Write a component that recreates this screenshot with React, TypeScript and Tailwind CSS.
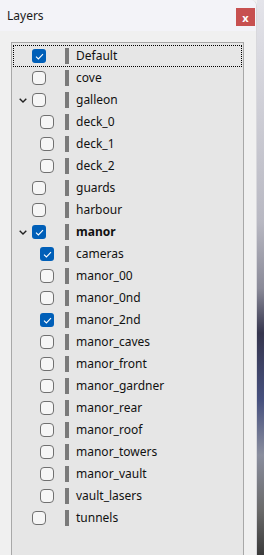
import React from "react";

type Layer = {
    name: string;
    level: number;
    checked?: boolean;
    expandable?: boolean;
    bold?: boolean;
    focused?: boolean;
};

const layers: Layer[] = [
    { name: "Default", level: 0, checked: true, focused: true },
    { name: "cove", level: 0 },
    { name: "galleon", level: 0, expandable: true },
    { name: "deck_0", level: 1 },
    { name: "deck_1", level: 1 },
    { name: "deck_2", level: 1 },
    { name: "guards", level: 0 },
    { name: "harbour", level: 0 },
    { name: "manor", level: 0, checked: true, expandable: true, bold: true },
    { name: "cameras", level: 1, checked: true },
    { name: "manor_00", level: 1 },
    { name: "manor_0nd", level: 1 },
    { name: "manor_2nd", level: 1, checked: true },
    { name: "manor_caves", level: 1 },
    { name: "manor_front", level: 1 },
    { name: "manor_gardner", level: 1 },
    { name: "manor_rear", level: 1 },
    { name: "manor_roof", level: 1 },
    { name: "manor_towers", level: 1 },
    { name: "manor_vault", level: 1 },
    { name: "vault_lasers", level: 1 },
    { name: "tunnels", level: 0 },
];

const Checkbox: React.FC<{ checked?: boolean }> = ({ checked }) =>
    checked ? (
        <div className="w-[14px] h-[14px] shrink-0 rounded-[3px] bg-[#005fb8] flex items-center justify-center">
            <svg width="9" height="7" viewBox="0 0 9 7" fill="none">
                <path d="M1 3.6 L3.4 6 L8 1.2" stroke="#ffffff" strokeWidth="1.1" />
            </svg>
        </div>
    ) : (
        <div className="w-[14px] h-[14px] shrink-0 rounded-[4px] border border-[#707070] bg-[#f6f6f6]" />
    );

const LayerRow: React.FC<{ layer: Layer }> = ({ layer }) => (
    <div
        className={
            "flex items-center h-[22px] mx-[1px] " +
            (layer.focused ? "outline-1 outline-dotted outline-black -outline-offset-1" : "")
        }
    >
        <div className="w-[19px] shrink-0 flex justify-center pl-[1px]">
            {layer.expandable && (
                <svg width="8" height="5" viewBox="0 0 8 5" fill="none">
                    <path d="M0.7 0.7 L4 4 L7.3 0.7" stroke="#222222" strokeWidth="1.4" />
                </svg>
            )}
        </div>
        <div className={"w-[33px] shrink-0 flex " + (layer.level ? "pl-[8px]" : "pl-0")}>
            <Checkbox checked={layer.checked} />
        </div>
        <div className="w-[4px] h-[16px] shrink-0 bg-[#7a7a7a]" />
        <span
            className={
                "ml-[7px] text-[12px] text-[#111111] leading-none " + (layer.bold ? "font-bold" : "")
            }
        >
            {layer.name}
        </span>
    </div>
);

export default function App() {
    return (
        <div
            className="flex w-[264px] h-[555px] overflow-hidden bg-[#f0f0f0]"
            style={{ fontFamily: '"Noto Sans", "Open Sans", sans-serif' }}
        >
            <div className="w-[257px] flex flex-col border-r border-[#d8d8dc] rounded-tr-[6px] overflow-hidden">
                <div className="h-[31px] bg-[#f3f3f8] flex items-center justify-between pl-[7px] pr-[1px]">
                    <span className="text-[12px] text-[#1a1a1a]">Layers</span>
                    <div className="w-[19px] h-[18px] bg-[#c75050] flex items-center justify-center mt-[3px]">
                        <span className="text-white text-[11px] font-bold leading-none">x</span>
                    </div>
                </div>
                <div className="flex-1 pl-[11px] pr-[12px] pt-[11px] bg-[#f0f0f0] flex">
                    <div className="flex-1 border border-[#a8a8a8] border-b-0 bg-[#e6e6e6] pt-[2px]">
                        {layers.map((l) => (
                            <LayerRow key={l.name} layer={l} />
                        ))}
                    </div>
                </div>
            </div>
            <div className="flex-1 bg-[linear-gradient(to_bottom,#e4e4ea_0%,#b8b8c2_40%,#8a8a98_52%,#36364e_60%,#46507e_72%,#8a8e9e_82%,#6a6a6a_92%,#3a3a3a_100%)]" />
        </div>
    );
}
